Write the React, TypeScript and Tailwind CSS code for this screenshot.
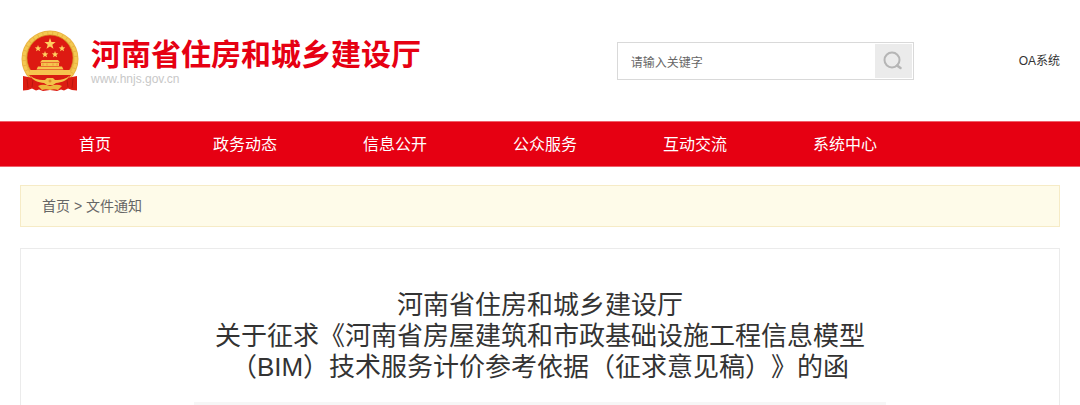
import React from 'react';

const navItems = ['首页', '政务动态', '信息公开', '公众服务', '互动交流', '系统中心'];

function Emblem() {
  return (
    <svg width="58" height="62" viewBox="0 0 58 62" aria-hidden="true">
      {/* wheat wreath */}
      <circle cx="29" cy="29" r="28.5" fill="#e9b443" />
      <circle cx="29" cy="29" r="26" fill="none" stroke="#f4c952" strokeWidth="3" strokeDasharray="4 1" />
      <circle cx="29" cy="28" r="23" fill="#dd1a12" stroke="#d08f1c" strokeWidth="0.6" />
      {/* stars */}
      <g fill="#ffd060">
        <path d="M29 8l1.400 4 4.200.1-3.300 2.600 1.200 4.100-3.500-2.400-3.500 2.400 1.200-4.100-3.300-2.600 4.200-.1z" />
        <path id="star" d="M17 15l.9 2.300 2.400.1-1.900 1.500.7 2.300-2.100-1.300-2 1.300.7-2.300-1.900-1.500 2.400-.1z" />
        <use href="#star" x="24" />
        <use href="#star" x="7" y="6" />
        <use href="#star" x="17" y="6" />
      </g>
      {/* gate tower */}
      <g fill="#f6c44e">
        <path d="M21 30h16l2 2.500H19z" />
        <path d="M20 33h18v3H20z" />
        <path d="M17 36.500h24l1.500 3h-27z" />
        <path d="M9 40h40l1 5H8z" />
      </g>
      <path d="M22 33.500v2M26 33.500v2M32 33.500v2M36 33.500v2" stroke="#d98a26" strokeWidth="0.6" />
      <path d="M8 45h42l-4 5H12z" fill="#d91d12" />
      {/* ribbons */}
      <path d="M2 46c5 1 10 2 14 2l13 5v7l-7 1-4-1.500-3 1-4-2-4 1.500-5 .5z" fill="#dc1c12" />
      <path d="M56 46c-5 1-10 2-14 2l-13 5v7l7 1 4-1.500 3 1 4-2 4 1.500 5 .5z" fill="#dc1c12" />
      <path d="M6 49l1 9M12 50l-1 7M52 49l-1 9M46 50l1 7" stroke="#b3140e" strokeWidth="0.8" />
      {/* wheat stems meeting at the gear */}
      <path d="M9 45.500c5 4 10 5 15 4.500l2-2h6l2 2c5 .5 10-.5 15-4.500-3 5-8 7-14 7.500l-3 2h-6l-3-2c-6-.5-11-2.500-14-7.500z" fill="#f3c24a" />
      <circle cx="29" cy="51" r="1.500" fill="#dd8f28" />
      <path d="M17 56c4-2 8-1 12 0 4-1 8-2 12 0l-4 4c-3-1-5-1-8 0-3-1-5-1-8 0z" fill="#edb63c" />
    </svg>
  );
}

function SearchBox() {
  return (
    <form
      className="flex h-[38px] w-[297px] border border-[#d9d9d9] p-px"
      onSubmit={(e) => e.preventDefault()}
    >
      <input
        type="text"
        aria-label="请输入关键字"
        placeholder="请输入关键字"
        className="min-w-0 flex-1 px-3 pt-1 text-xs text-[#666] outline-none placeholder:text-[#666]"
      />
      <button type="submit" aria-label="搜索" className="flex w-[37px] items-center justify-center bg-[#ebebeb]">
        <svg width="20" height="20" viewBox="0 0 20 20" fill="none" stroke="#b5b5b5" strokeWidth="2" aria-hidden="true">
          <circle cx="9" cy="9" r="7.500" />
          <path d="M14 14.500l3.500 2.500" strokeWidth="2.500" strokeLinecap="round" />
        </svg>
      </button>
    </form>
  );
}

export default function App() {
  return (
    <div className="bg-white font-['Liberation_Sans','Noto_Sans_CJK_SC',sans-serif] text-[#333]">
      <header className="flex items-center px-5 pt-[30px] pb-[29px]">
        <a href="#" className="flex items-center gap-3 pl-px">
          <Emblem />
          <div>
            <div className="text-[30px] leading-9 font-bold text-[#e60012]">河南省住房和城乡建设厅</div>
            <div className="text-xs leading-3 text-[#c8c8c8]">www.hnjs.gov.cn</div>
          </div>
        </a>
        <div className="ml-auto flex items-center gap-[105px]">
          <SearchBox />
          <a href="#" className="text-xs">OA系统</a>
        </div>
      </header>

      <nav className="border-y border-[#f0606b] bg-[#e60012] px-5">
        <ul className="flex">
          {navItems.map((item) => (
            <li key={item} className="w-[150px] text-center">
              <a href="#" className="block pt-px text-base leading-[43px] text-white">{item}</a>
            </li>
          ))}
        </ul>
      </nav>

      <main className="px-5 pt-[18px]">
        <div className="border border-[#f6ebc6] bg-[#fefbe9] px-[21px] pt-px text-sm leading-[39px] text-[#666]">
          <a href="#">首页</a> &gt; <a href="#">文件通知</a>
        </div>

        <article className="mt-[21px] border border-b-0 border-[#ebebeb] pt-[41px]">
          <h1 className="text-center text-[26px] leading-[31px] [text-spacing-trim:space-all]">
            河南省住房和城乡建设厅
            <br />
            关于征求《河南省房屋建筑和市政基础设施工程信息模型
            <br />
            （BIM）技术服务计价参考依据（征求意见稿）》的函
          </h1>
          <div className="mx-auto mt-[19px] h-[3px] w-2/3 bg-[#f6f6f6]" />
        </article>
      </main>
    </div>
  );
}
